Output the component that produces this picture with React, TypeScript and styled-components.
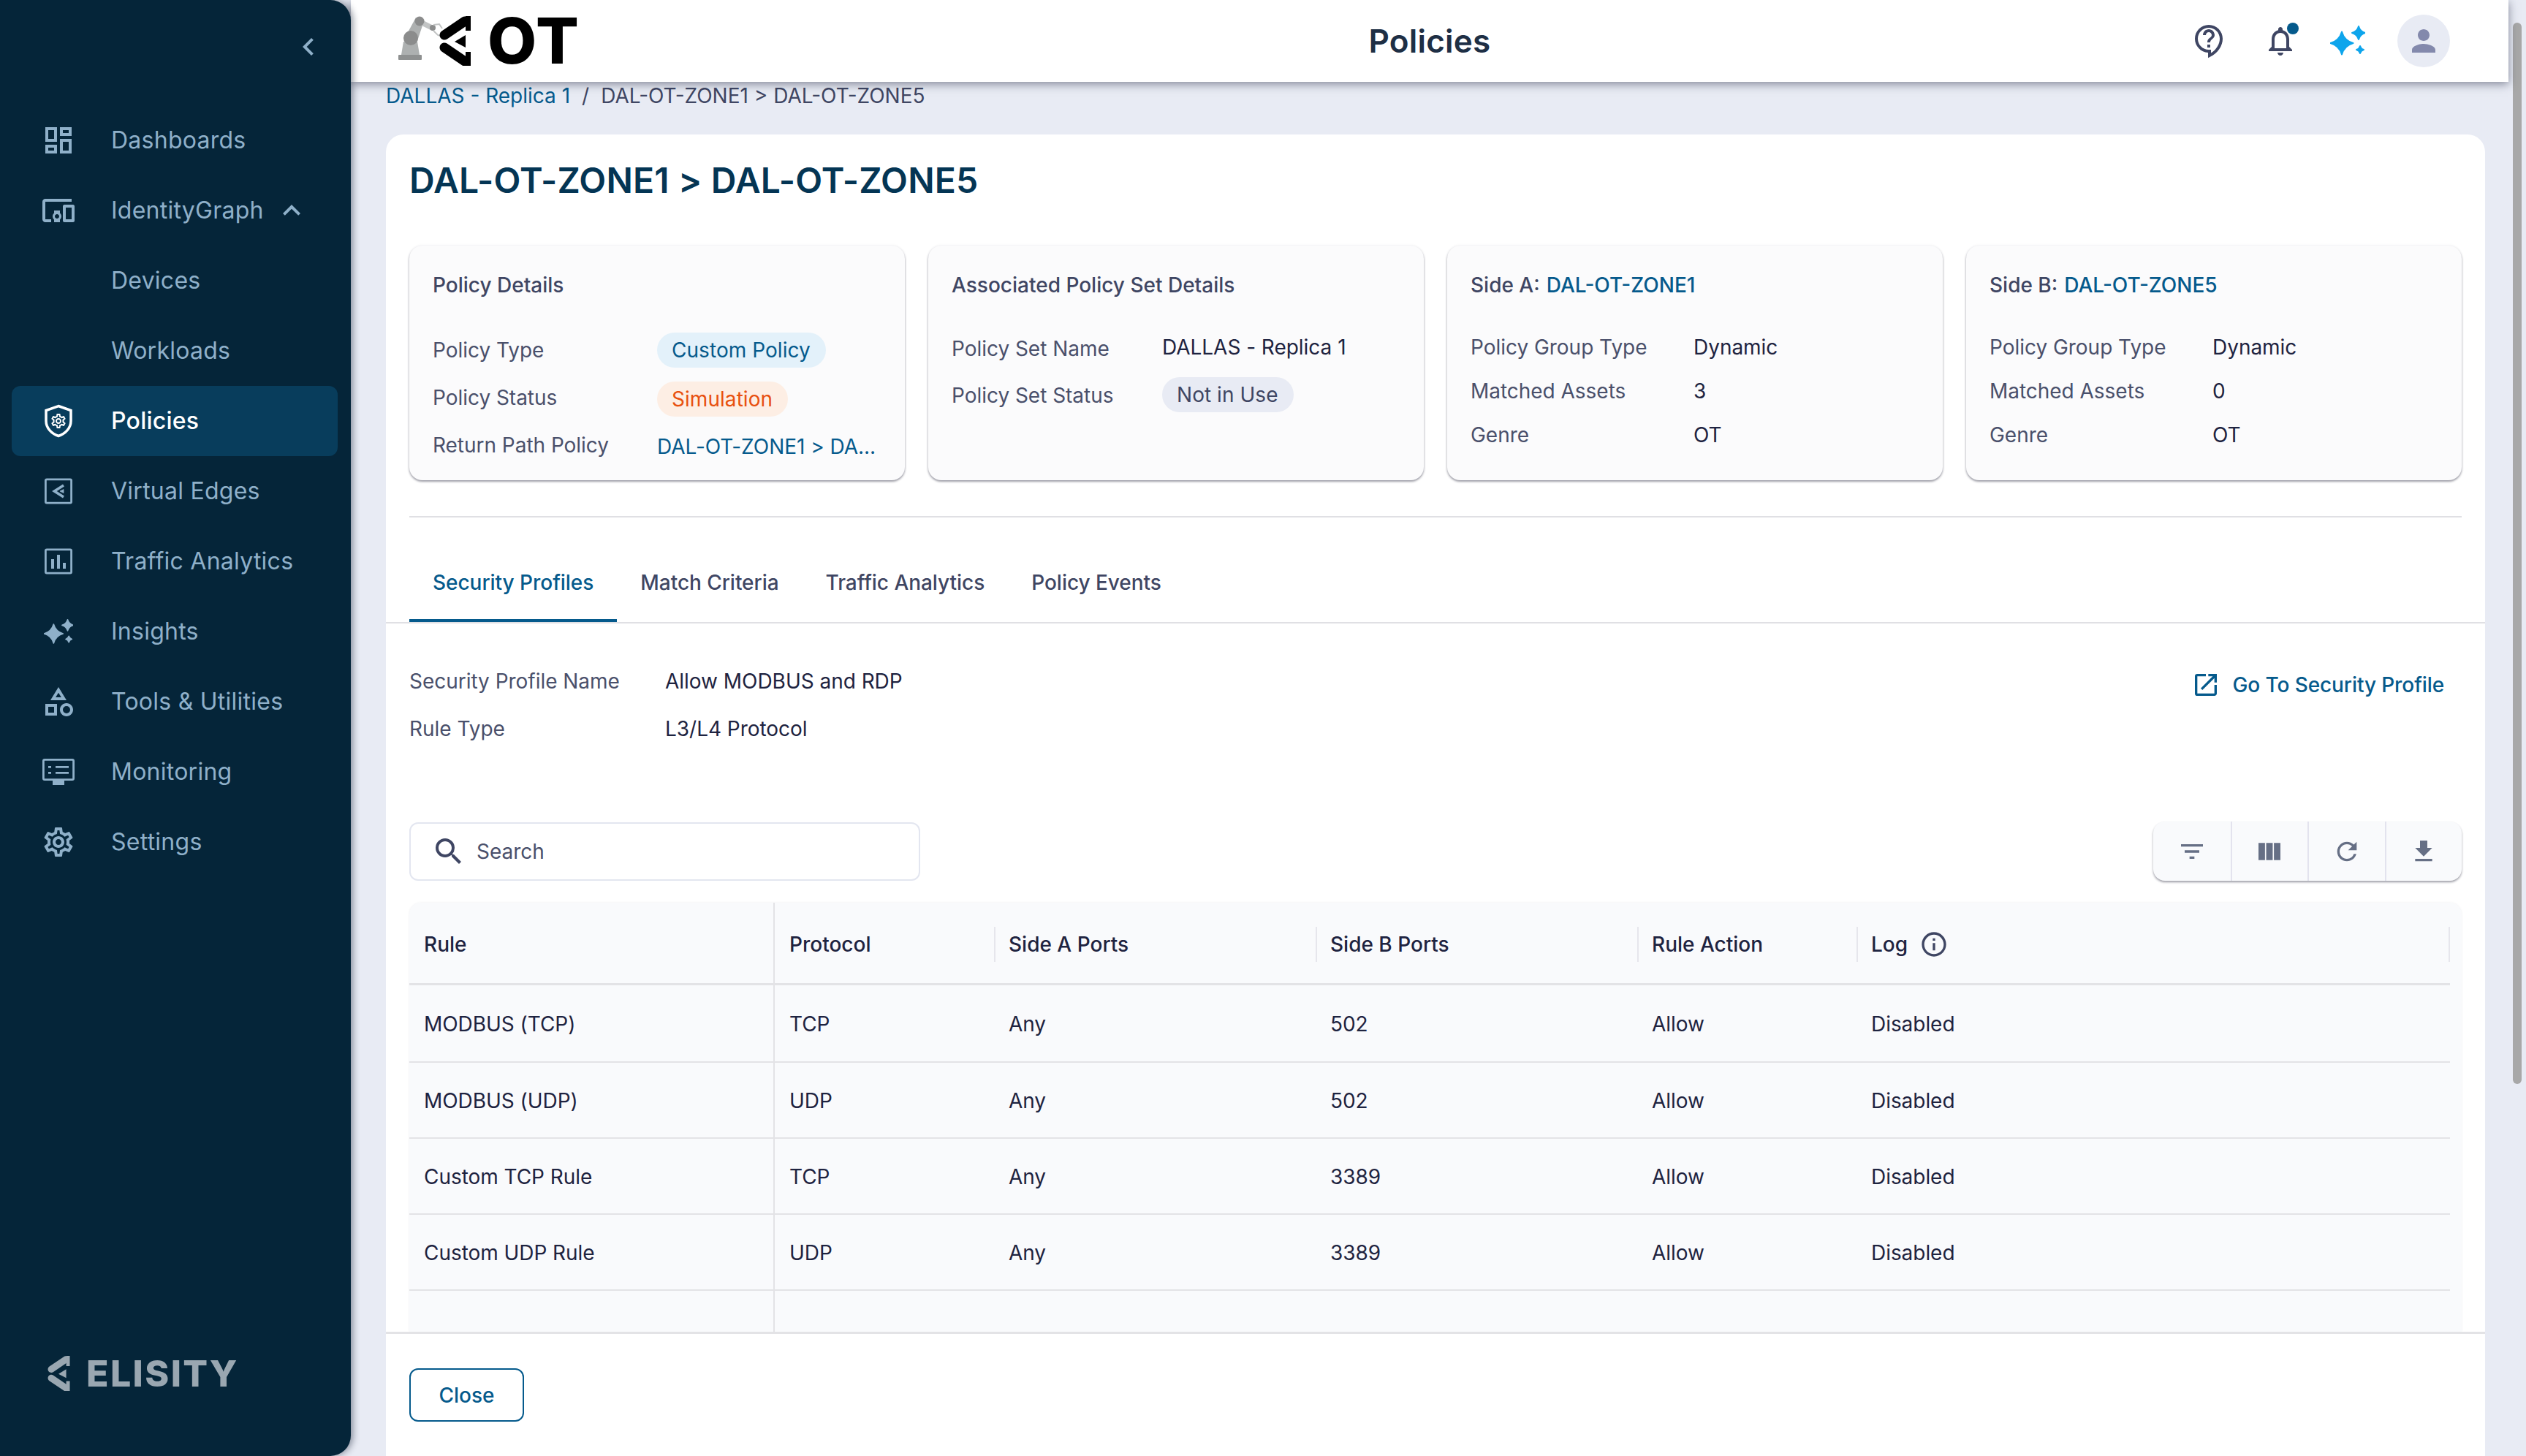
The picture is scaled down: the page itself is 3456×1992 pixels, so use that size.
import React from "react"
import styled, {createGlobalStyle} from "styled-components"
import {
	MdChevronLeft,
	MdExpandLess,
	MdFileDownload,
	MdFilterList,
	MdInfoOutline,
	MdOutlineCategory,
	MdOutlineContactSupport,
	MdOutlineDashboard,
	MdOutlineDevicesOther,
	MdOutlineNotifications,
	MdOutlineOpenInNew,
	MdOutlineSettings,
	MdPerson,
	MdRefresh,
	MdSearch,
	MdViewColumn
} from "react-icons/md"

const GlobalStyle = createGlobalStyle`
	html, body {
		margin: 0;
		padding: 0;
		background: #e8ebf4;
		font-family: "Inter", "Noto Sans", sans-serif;
		overflow: hidden;
	}
	* {
		box-sizing: border-box;
	}
`

const COLUMNS = "500px 300px 440px 440px 300px 812px"

const Page = styled.div`
	display: flex;
	width: 3456px;
	height: 1992px;
	overflow: hidden;
	background: #e8ebf4;
`

/* sidebar */

const Sidebar = styled.aside`
	flex: 0 0 480px;
	display: flex;
	flex-direction: column;
	background: #052539;
	border-radius: 0 28px 28px 0;
	box-shadow: 3px 0 10px rgba(20, 30, 50, 0.45);
	position: relative;
	z-index: 3;
`

const CollapseRow = styled.div`
	height: 144px;
	padding: 40px 34px 0 0;
	display: flex;
	justify-content: flex-end;
	align-items: flex-start;
	color: #8fb0c9;
	font-size: 48px;
`

const NavList = styled.nav`
	display: flex;
	flex-direction: column;
	flex: 1;
`

const NavItem = styled.div<{ $active?: boolean }>`
	height: 96px;
	margin: 0 18px 0 16px;
	padding-left: 40px;
	display: flex;
	align-items: center;
	gap: 48px;
	border-radius: 12px;
	font-size: 32px;
	letter-spacing: 0.25px;
	font-weight: ${({$active}) => $active ? 500 : 400};
	color: ${({$active}) => $active ? "#ffffff" : "#8fb0c9"};
	background: ${({$active}) => $active ? "#083d5c" : "transparent"};
`

const NavIcon = styled.span`
	flex: 0 0 48px;
	width: 48px;
	height: 48px;
	display: flex;
	align-items: center;
	justify-content: center;
	font-size: 48px;
`

const NavLabel = styled.span<{ $sub?: boolean }>`
	margin-left: ${({$sub}) => $sub ? "96px" : "0"};
	margin-bottom: 2px;
	white-space: nowrap;
`

const Caret = styled.span`
	display: flex;
	font-size: 48px;
	margin-left: -34px;
`

const Brand = styled.div`
	height: 140px;
	padding: 0 0 89px 64px;
	display: flex;
	align-items: flex-end;
	gap: 22px;
	color: #9aa7b1;
`

const BrandName = styled.span`
	font-family: "Inter", sans-serif;
	font-size: 50px;
	line-height: 50px;
	font-weight: 800;
	letter-spacing: 2.4px;
	margin-bottom: -1px;
`

/* main column */

const Main = styled.main`
	flex: 1;
	min-width: 0;
	display: flex;
	flex-direction: column;
	height: 100%;
`

const Header = styled.header`
	flex: 0 0 112px;
	display: grid;
	grid-template-columns: 1fr auto 1fr;
	align-items: center;
	padding: 0 80px;
	background: #ffffff;
	box-shadow: 0 3px 12px rgba(30, 35, 60, 0.5);
	position: relative;
	z-index: 2;
`

const LogoWrap = styled.div`
	display: flex;
	align-items: center;
	gap: 23px;
	margin-left: -15px;
	color: #000000;
`

const LogoMark = styled.span`
	display: flex;
`

const LogoText = styled.span`
	font-size: 87px;
	line-height: 86px;
	font-weight: 800;
	letter-spacing: 1.5px;
`

const HeaderTitle = styled.h1`
	margin: 0;
	font-size: 44px;
	font-weight: 600;
	letter-spacing: 0.2px;
	color: #1e2f45;
`

const HeaderActions = styled.div`
	display: flex;
	justify-content: flex-end;
	align-items: center;
	gap: 44px;
`

const HeaderIcon = styled.span<{ $color?: string; $gap?: number }>`
	width: 48px;
	height: 48px;
	display: flex;
	align-items: center;
	justify-content: center;
	font-size: 48px;
	position: relative;
	color: ${({$color}) => $color || "#3f4663"};
	margin-right: ${({$gap}) => $gap || 0}px;
`

const BellDot = styled.span`
	position: absolute;
	top: -1px;
	right: -1px;
	width: 16px;
	height: 16px;
	border-radius: 50%;
	background: #055a8c;
`

const Avatar = styled.span`
	width: 72px;
	height: 72px;
	border-radius: 50%;
	background: #e8ebf4;
	color: #8389ac;
	display: flex;
	align-items: center;
	justify-content: center;
	font-size: 48px;
`

const Breadcrumb = styled.div`
	flex: 0 0 72px;
	padding: 0 0 0 48px;
	font-size: 28px;
	line-height: 38px;
	color: #3f4663;
	white-space: nowrap;
`

const Crumb = styled.span`
	color: #055a8c;
`

const CrumbSep = styled.span`
	margin: 0 16px;
`

const ContentCard = styled.section`
	flex: 1;
	min-height: 0;
	margin: 0 32px 0 48px;
	display: flex;
	flex-direction: column;
	background: #ffffff;
	border-radius: 24px 24px 0 0;
`

const PageTitle = styled.h2`
	margin: 0;
	flex: 0 0 152px;
	padding: 33px 32px 0;
	font-size: 48px;
	line-height: 60px;
	font-weight: 600;
	letter-spacing: 0.17px;
	color: #043554;
`

const CardRow = styled.div`
	flex: 0 0 321px;
	margin: 0 32px;
	display: grid;
	grid-template-columns: repeat(4, 1fr);
	gap: 32px;
`

const InfoCard = styled.div`
	padding: 38px 32px 0;
	background: #fbfbfc;
	border-radius: 18px;
	box-shadow: 0 2px 3px rgba(40, 40, 60, 0.45), 0 0 4px rgba(40, 40, 60, 0.06);
`

const InfoTitle = styled.div`
	font-size: 28px;
	line-height: 32px;
	font-weight: 500;
	color: #3f4663;
	margin-bottom: 32px;
	white-space: nowrap;
`

const TitleLink = styled.span`
	color: #055a8c;
	margin-left: 9px;
`

const InfoGrid = styled.div<{ $label: number; $pitch: number; $top: number }>`
	display: grid;
	grid-template-columns: ${({$label}) => $label}px 1fr;
	grid-auto-rows: ${({$pitch}) => $pitch}px;
	margin-top: ${({$top}) => $top}px;
	align-items: center;
	font-size: 28px;
	white-space: nowrap;
`

const InfoLabel = styled.span<{ $drop?: number }>`
	color: #4a506b;
	letter-spacing: -0.03px;
	margin-top: ${({$drop}) => $drop || 0}px;
`

const InfoValue = styled.span<{ $link?: boolean; $drop?: number }>`
	color: ${({$link}) => $link ? "#055a8c" : "#1e2340"};
	letter-spacing: -0.03px;
	margin-top: ${({$drop}) => $drop || 0}px;
`

const Chip = styled.span<{ $bg: string; $fg: string }>`
	display: inline-flex;
	align-items: center;
	height: 48px;
	padding: 0 21px 0 20px;
	border-radius: 24px;
	font-size: 28px;
	letter-spacing: 0.05px;
	background: ${({$bg}) => $bg};
	color: ${({$fg}) => $fg};
`

const Divider = styled.hr`
	flex: 0 0 2px;
	width: calc(100% - 64px);
	margin: 49px 32px 0;
	border: 0;
	background: #e0e0e4;
`

const Tabs = styled.div`
	flex: 0 0 145px;
	padding: 35px 0 0 32px;
	display: flex;
	border-bottom: 2px solid #e0e0e4;
`

const Tab = styled.div<{ $active?: boolean }>`
	height: 108px;
	padding: 0 32px;
	display: flex;
	align-items: center;
	font-size: 28px;
	font-weight: 500;
	letter-spacing: -0.04px;
	color: ${({$active}) => $active ? "#055a8c" : "#3f4663"};
	box-shadow: ${({$active}) => $active ? "inset 0 -4px 0 #055a8c" : "none"};
`

const ProfileBar = styled.div`
	flex: 0 0 271px;
	padding: 46px 56px 0 32px;
	display: flex;
	justify-content: space-between;
	align-items: flex-start;
`

const ProfileGrid = styled.div`
	display: grid;
	grid-template-columns: 350px auto;
	grid-auto-rows: 65px;
	align-items: center;
	font-size: 28px;
`

const GoLink = styled.div`
	display: flex;
	align-items: center;
	gap: 17px;
	margin-top: 10px;
	height: 56px;
	font-size: 28px;
	font-weight: 500;
	letter-spacing: -0.1px;
	color: #055a8c;
`

const GoIcon = styled.span`
	display: flex;
	font-size: 40px;
`

const ToolRow = styled.div`
	flex: 0 0 81px;
	margin: 0 32px;
	display: flex;
	justify-content: space-between;
	align-items: center;
`

const SearchBox = styled.div`
	width: 699px;
	height: 80px;
	padding-left: 28px;
	display: flex;
	align-items: center;
	gap: 14px;
	border: 2px solid #e3e6f0;
	border-radius: 12px;
	font-size: 28px;
	color: #4a506b;
`

const SearchIcon = styled.span`
	display: flex;
	font-size: 48px;
	color: #3f4663;
`

const ToolGroup = styled.div`
	display: flex;
	height: 81px;
	background: #f9fafc;
	border-radius: 16px;
	box-shadow: 0 2px 3px rgba(40, 40, 60, 0.45);
	overflow: hidden;
`

const ToolButton = styled.div<{ $first?: boolean }>`
	width: 105.5px;
	display: flex;
	align-items: center;
	justify-content: center;
	font-size: 40px;
	color: #666f85;
	border-left: ${({$first}) => $first ? "none" : "2px solid #e3e3ee"};
`

const TableWrap = styled.div`
	flex: 1;
	min-height: 0;
	margin: 30px 32px 0;
	background: #f9fafc;
	border-radius: 16px 16px 0 0;
	box-shadow: 0 0 3px rgba(60, 60, 90, 0.08);
	overflow: hidden;
`

const TableHead = styled.div`
	height: 113px;
	width: 2792px;
	display: grid;
	grid-template-columns: ${COLUMNS};
	border-bottom: 3px solid #e3e3e6;
`

const HeadCell = styled.div<{ $split?: boolean }>`
	display: flex;
	align-items: center;
	padding-top: 4px;
	padding-left: ${({$split}) => $split ? "0" : "20px"};
	font-size: 28px;
	font-weight: 500;
	color: #1e2340;
	border-right: ${({$split}) => $split ? "none" : "2px solid #e3e3e6"};
`

const HeadText = styled.span<{ $plain?: boolean; $end?: boolean }>`
	flex: 1;
	height: 48px;
	display: flex;
	align-items: center;
	gap: 16px;
	padding-left: ${({$plain}) => $plain ? "20px" : "18px"};
	border-left: ${({$plain}) => $plain ? "none" : "2px solid #e6e6ec"};
	border-right: ${({$end}) => $end ? "2px solid #e6e6ec" : "none"};
`

const InfoIcon = styled.span`
	display: flex;
	font-size: 40px;
	color: #3f4663;
`

const Row = styled.div<{ $fill?: boolean }>`
	height: ${({$fill}) => $fill ? "56px" : "104px"};
	width: 2792px;
	display: grid;
	grid-template-columns: ${COLUMNS};
	border-bottom: ${({$fill}) => $fill ? "none" : "2px solid #e3e3e6"};

	&:nth-child(2) {
		height: 106px;
	}
`

const Cell = styled.div<{ $first?: boolean }>`
	display: flex;
	align-items: center;
	padding: 2px 0 0 20px;
	font-size: 28px;
	letter-spacing: -0.05px;
	color: #1e2340;
	border-right: ${({$first}) => $first ? "2px solid #e3e3e6" : "none"};
`

const Footer = styled.footer`
	flex: 0 0 170px;
	padding: 47px 32px 0;
	border-top: 3px solid #e3e3e6;
`

const CloseButton = styled.button`
	width: 157px;
	height: 73px;
	padding: 0;
	background: #ffffff;
	border: 2px solid #055a8c;
	border-radius: 12px;
	font-family: inherit;
	font-size: 28px;
	font-weight: 500;
	color: #055a8c;
`

const ScrollGutter = styled.div`
	flex: 0 0 24px;
	padding: 31px 6px 0;
`

const ScrollThumb = styled.div`
	height: 1452px;
	border-radius: 6px;
	background: #a8a8a8;
`

/* drawings */

const star = (cx: number, cy: number, r: number) => {
	const k = r * 0.22
	return `M${cx} ${cy - r}Q${cx + k} ${cy - k} ${cx + r} ${cy}Q${cx + k} ${cy + k} ${cx} ${cy + r}Q${cx - k} ${cy + k} ${cx - r} ${cy}Q${cx - k} ${cy - k} ${cx} ${cy - r}Z`
}

const Sparkles = ({width, height}: { width: number, height: number }) => (
	<svg width={width} height={height} viewBox="0 0 48 42" fill="currentColor" stroke="currentColor" strokeWidth="2" strokeLinejoin="round">
		<path d={star(16, 24, 15.5)}/>
		<path d={star(39, 10, 9)}/>
		<path d={star(41, 33, 5)}/>
	</svg>
)

const Chevrons = ({fill, viewBox, width, height}: { fill: string, viewBox: string, width: number, height: number }) => (
	<svg width={width} height={height} viewBox={viewBox}>
		<g fill="none" stroke={fill} strokeWidth="13" strokeLinecap="round">
			<path d="M92 7 64 26"/>
			<path d="M64 43 92 62"/>
		</g>
		<path d="M93 26 78 35 93 43Z" fill={fill}/>
		<path d="M93 0h7v20h-7zM93 49h7v19h-7z" fill={fill}/>
	</svg>
)

const Robot = () => (
	<svg width="55" height="68" viewBox="0 0 55 68" overflow="visible">
		<rect x="0" y="53" width="32" height="7" rx="1" fill="#8e9090"/>
		<path d="M4 53 7 35H26L29 53Z" fill="#adb0b0"/>
		<path d="M12 24 24 2 34 10 26 34Z" fill="#adb0b0"/>
		<circle cx="17" cy="30" r="10" fill="#8b8c8c"/>
		<path d="M30 4 46 12 44 19 28 11Z" fill="#c2c4c4"/>
		<circle cx="29" cy="7" r="6.5" fill="#8b8c8c"/>
		<circle cx="47" cy="16" r="4" fill="#8b8c8c"/>
		<path d="M48 12 56 11 60 17M48 20 54 26 60 28" fill="none" stroke="#c2c4c4" strokeWidth="2"/>
	</svg>
)

const VirtualEdgeIcon = () => (
	<svg width="48" height="48" viewBox="0 0 24 24" fill="none" stroke="currentColor">
		<rect x="3.2" y="3.9" width="17.6" height="16.2" rx="0.8" strokeWidth="1.4"/>
		<path d="M15.5 8 9.2 12 15.5 16" strokeWidth="1.8"/>
		<path d="M15.5 10.8 13 12 15.5 13.2Z" fill="currentColor" strokeWidth="0.4"/>
	</svg>
)

const TrafficIcon = () => (
	<svg width="48" height="48" viewBox="0 0 24 24" fill="currentColor">
		<rect x="3.2" y="3.9" width="17.6" height="16.2" rx="0.8" fill="none" stroke="currentColor" strokeWidth="1.4"/>
		<path d="M7 10.5h2v6.5H7zM11 7.5h2V17h-2zM15 13h2v4h-2z"/>
	</svg>
)

const MonitorIcon = () => (
	<svg width="48" height="48" viewBox="0 0 24 24" fill="currentColor">
		<rect x="1.7" y="3.7" width="20.6" height="13.6" rx="0.8" fill="none" stroke="currentColor" strokeWidth="1.4"/>
		<path d="M8 18h8v3H8zM5 8h2v1.4H5zM10 8h9v1.4h-9zM5 12h2v1.4H5zM10 12h9v1.4h-9z"/>
	</svg>
)

const ShieldIcon = () => (
	<svg width="48" height="48" viewBox="0 0 48 48" fill="none">
		<path d="M24 3.5 41 9.5V24C41 34 33 41.5 24 44.5 15 41.5 7 34 7 24V9.5Z" stroke="currentColor" strokeWidth="3.5"/>
		<MdOutlineSettings x={12} y={12} size={24}/>
	</svg>
)

type NavEntry = {
	label: string,
	icon?: React.ReactNode,
	caret?: boolean,
	active?: boolean
}

const NAV: NavEntry[] = [
	{label: "Dashboards", icon: <MdOutlineDashboard/>},
	{label: "IdentityGraph", icon: <MdOutlineDevicesOther/>, caret: true},
	{label: "Devices"},
	{label: "Workloads"},
	{label: "Policies", icon: <ShieldIcon/>, active: true},
	{label: "Virtual Edges", icon: <VirtualEdgeIcon/>},
	{label: "Traffic Analytics", icon: <TrafficIcon/>},
	{label: "Insights", icon: <Sparkles width={40} height={35}/>},
	{label: "Tools & Utilities", icon: <MdOutlineCategory/>},
	{label: "Monitoring", icon: <MonitorIcon/>},
	{label: "Settings", icon: <MdOutlineSettings/>}
]

const RULES = [
	["MODBUS (TCP)", "TCP", "Any", "502", "Allow", "Disabled"],
	["MODBUS (UDP)", "UDP", "Any", "502", "Allow", "Disabled"],
	["Custom TCP Rule", "TCP", "Any", "3389", "Allow", "Disabled"],
	["Custom UDP Rule", "UDP", "Any", "3389", "Allow", "Disabled"]
]

const SIDES = [
	{title: "Side A:", zone: "DAL-OT-ZONE1", assets: "3"},
	{title: "Side B:", zone: "DAL-OT-ZONE5", assets: "0"}
]

const App = () => (
	<Page>
		<GlobalStyle/>
		<Sidebar>
			<CollapseRow><MdChevronLeft/></CollapseRow>
			<NavList>
				{NAV.map(item => (
					<NavItem key={item.label} $active={item.active}>
						{item.icon ? <NavIcon>{item.icon}</NavIcon> : null}
						<NavLabel $sub={!item.icon}>{item.label}</NavLabel>
						{item.caret ? <Caret><MdExpandLess/></Caret> : null}
					</NavItem>
				))}
			</NavList>
			<Brand>
				<Chevrons fill="#9aa7b1" viewBox="56 0 44 68" width={32} height={48}/>
				<BrandName>ELISITY</BrandName>
			</Brand>
		</Sidebar>
		<Main>
			<Header>
				<LogoWrap>
					<LogoMark>
						<Robot/>
						<Chevrons fill="#000000" viewBox="56 0 44 68" width={44} height={68}/>
					</LogoMark>
					<LogoText>OT</LogoText>
				</LogoWrap>
				<HeaderTitle>Policies</HeaderTitle>
				<HeaderActions>
					<HeaderIcon $gap={5}><MdOutlineContactSupport/></HeaderIcon>
					<HeaderIcon><MdOutlineNotifications/><BellDot/></HeaderIcon>
					<HeaderIcon $color="#0ea5ec"><Sparkles width={48} height={42}/></HeaderIcon>
					<Avatar><MdPerson/></Avatar>
				</HeaderActions>
			</Header>
			<Breadcrumb>
				<Crumb>DALLAS - Replica 1</Crumb>
				<CrumbSep>/</CrumbSep>
				DAL-OT-ZONE1 &gt; DAL-OT-ZONE5
			</Breadcrumb>
			<ContentCard>
				<PageTitle>DAL-OT-ZONE1 &gt; DAL-OT-ZONE5</PageTitle>
				<CardRow>
					<InfoCard>
						<InfoTitle>Policy Details</InfoTitle>
						<InfoGrid $label={307} $pitch={65} $top={40}>
							<InfoLabel>Policy Type</InfoLabel>
							<span><Chip $bg="#e3f1fa" $fg="#055a8c">Custom Policy</Chip></span>
							<InfoLabel>Policy Status</InfoLabel>
							<InfoValue $drop={4}><Chip $bg="#fdeee4" $fg="#e8500f">Simulation</Chip></InfoValue>
							<InfoLabel>Return Path Policy</InfoLabel>
							<InfoValue $link $drop={4}>DAL-OT-ZONE1 &gt; DA...</InfoValue>
						</InfoGrid>
					</InfoCard>
					<InfoCard>
						<InfoTitle>Associated Policy Set Details</InfoTitle>
						<InfoGrid $label={288} $pitch={65} $top={36}>
							<InfoLabel $drop={5}>Policy Set Name</InfoLabel>
							<InfoValue>DALLAS - Replica 1</InfoValue>
							<InfoLabel $drop={2}>Policy Set Status</InfoLabel>
							<span><Chip $bg="#e8ebf4" $fg="#3f4663">Not in Use</Chip></span>
						</InfoGrid>
					</InfoCard>
					{SIDES.map(side => (
						<InfoCard key={side.title}>
							<InfoTitle>{side.title}<TitleLink>{side.zone}</TitleLink></InfoTitle>
							<InfoGrid $label={305} $pitch={60} $top={39}>
								<InfoLabel>Policy Group Type</InfoLabel>
								<InfoValue>Dynamic</InfoValue>
								<InfoLabel>Matched Assets</InfoLabel>
								<InfoValue>{side.assets}</InfoValue>
								<InfoLabel>Genre</InfoLabel>
								<InfoValue>OT</InfoValue>
							</InfoGrid>
						</InfoCard>
					))}
				</CardRow>
				<Divider/>
				<Tabs>
					<Tab $active>Security Profiles</Tab>
					<Tab>Match Criteria</Tab>
					<Tab>Traffic Analytics</Tab>
					<Tab>Policy Events</Tab>
				</Tabs>
				<ProfileBar>
					<ProfileGrid>
						<InfoLabel>Security Profile Name</InfoLabel>
						<InfoValue>Allow MODBUS and RDP</InfoValue>
						<InfoLabel>Rule Type</InfoLabel>
						<InfoValue>L3/L4 Protocol</InfoValue>
					</ProfileGrid>
					<GoLink><GoIcon><MdOutlineOpenInNew/></GoIcon>Go To Security Profile</GoLink>
				</ProfileBar>
				<ToolRow>
					<SearchBox><SearchIcon><MdSearch/></SearchIcon>Search</SearchBox>
					<ToolGroup>
						<ToolButton $first><MdFilterList/></ToolButton>
						<ToolButton><MdViewColumn/></ToolButton>
						<ToolButton><MdRefresh/></ToolButton>
						<ToolButton><MdFileDownload/></ToolButton>
					</ToolGroup>
				</ToolRow>
				<TableWrap>
					<TableHead>
						<HeadCell>Rule</HeadCell>
						<HeadCell $split><HeadText $plain>Protocol</HeadText></HeadCell>
						<HeadCell $split><HeadText>Side A Ports</HeadText></HeadCell>
						<HeadCell $split><HeadText>Side B Ports</HeadText></HeadCell>
						<HeadCell $split><HeadText>Rule Action</HeadText></HeadCell>
						<HeadCell $split>
							<HeadText $end>Log<InfoIcon><MdInfoOutline/></InfoIcon></HeadText>
						</HeadCell>
					</TableHead>
					{RULES.map(rule => (
						<Row key={rule[0]}>
							{rule.map((value, index) => (
								<Cell key={index} $first={index === 0}>{value}</Cell>
							))}
						</Row>
					))}
					<Row $fill><Cell $first/></Row>
				</TableWrap>
				<Footer><CloseButton>Close</CloseButton></Footer>
			</ContentCard>
		</Main>
		<ScrollGutter><ScrollThumb/></ScrollGutter>
	</Page>
)

export default App
